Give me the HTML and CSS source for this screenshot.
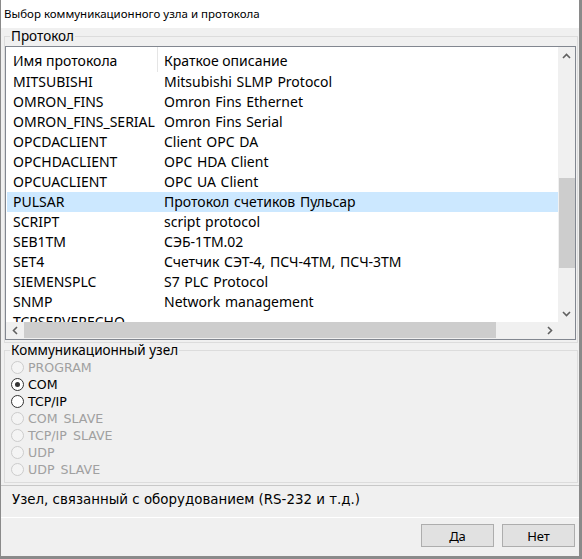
FILE: index.html
```html
<!DOCTYPE html>
<html lang="ru">
<head>
<meta charset="utf-8">
<title>Выбор коммуникационного узла и протокола</title>
<link rel="stylesheet" href="styles.css">
</head>
<body>
<div class="window">
  <div class="titlebar">Выбор коммуникационного узла и протокола</div>
  <fieldset class="group group-proto">
    <legend>Протокол</legend>
    <div class="listbox">
      <div class="view">
        <div class="lv-header">
          <div class="c1">Имя протокола</div>
          <div class="c2">Краткое описание</div>
        </div>
        <div class="lv-row"><div class="c1">MITSUBISHI</div><div class="c2">Mitsubishi SLMP Protocol</div></div>
        <div class="lv-row"><div class="c1">OMRON_FINS</div><div class="c2">Omron Fins Ethernet</div></div>
        <div class="lv-row"><div class="c1">OMRON_FINS_SERIAL</div><div class="c2">Omron Fins Serial</div></div>
        <div class="lv-row"><div class="c1">OPCDACLIENT</div><div class="c2">Client OPC DA</div></div>
        <div class="lv-row"><div class="c1">OPCHDACLIENT</div><div class="c2">OPC HDA Client</div></div>
        <div class="lv-row"><div class="c1">OPCUACLIENT</div><div class="c2">OPC UA Client</div></div>
        <div class="lv-row selected"><div class="c1">PULSAR</div><div class="c2">Протокол счетиков Пульсар</div></div>
        <div class="lv-row"><div class="c1">SCRIPT</div><div class="c2">script protocol</div></div>
        <div class="lv-row"><div class="c1">SEB1TM</div><div class="c2">СЭБ-1ТМ.02</div></div>
        <div class="lv-row"><div class="c1">SET4</div><div class="c2">Счетчик СЭТ-4, ПСЧ-4ТМ, ПСЧ-3ТМ</div></div>
        <div class="lv-row"><div class="c1">SIEMENSPLC</div><div class="c2">S7 PLC Protocol</div></div>
        <div class="lv-row"><div class="c1">SNMP</div><div class="c2">Network management</div></div>
        <div class="lv-row"><div class="c1">TCPSERVERECHO</div><div class="c2"></div></div>
      </div>
      <div class="vscroll">
        <div class="sb-btn">
          <svg width="9" height="6" viewBox="0 0 9 6"><path d="M1 5 L4.5 1.5 L8 5" fill="none" stroke="#606060" stroke-width="1.6"/></svg>
        </div>
        <div class="sb-track">
          <div class="sb-thumb-v" style="margin-top:114px;height:90px"></div>
        </div>
        <div class="sb-btn">
          <svg width="9" height="6" viewBox="0 0 9 6"><path d="M1 1 L4.5 4.5 L8 1" fill="none" stroke="#606060" stroke-width="1.6"/></svg>
        </div>
      </div>
      <div class="hscroll">
        <div class="sb-btn">
          <svg width="6" height="9" viewBox="0 0 6 9"><path d="M5 1 L1.5 4.5 L5 8" fill="none" stroke="#606060" stroke-width="1.6"/></svg>
        </div>
        <div class="sb-track-h">
          <div class="sb-thumb-h" style="width:472px"></div>
        </div>
        <div class="sb-btn">
          <svg width="6" height="9" viewBox="0 0 6 9"><path d="M1 1 L4.5 4.5 L1 8" fill="none" stroke="#606060" stroke-width="1.6"/></svg>
        </div>
      </div>
      <div class="corner"></div>
    </div>
  </fieldset>
  <fieldset class="group group-node">
    <legend>Коммуникационный узел</legend>
    <label class="radio disabled"><span class="dot"></span>PROGRAM</label>
    <label class="radio checked"><span class="dot"></span>COM</label>
    <label class="radio"><span class="dot"></span>TCP/IP</label>
    <label class="radio disabled"><span class="dot"></span>COM SLAVE</label>
    <label class="radio disabled"><span class="dot"></span>TCP/IP SLAVE</label>
    <label class="radio disabled"><span class="dot"></span>UDP</label>
    <label class="radio disabled"><span class="dot"></span>UDP SLAVE</label>
  </fieldset>
  <div class="desc">Узел, связанный с оборудованием (RS-232 и т.д.)</div>
  <div class="buttons">
    <button class="btn">Да</button>
    <button class="btn">Нет</button>
  </div>
</div>
</body>
</html>
```
FILE: styles.css
```css
html, body {
  margin: 0;
  padding: 0;
  background: #ffffff;
}
.window {
  width: 582px;
  height: 559px;
  box-sizing: border-box;
  border-left: 1px solid #8a8a8a;
  border-right: 3px solid #8a8a8a;
  border-bottom: 3px solid #8a8a8a;
  background: #f0f0f0;
  display: flex;
  flex-direction: column;
  font-family: "Noto Sans", "Open Sans", sans-serif;
  font-size: 13px;
  color: #000;
  overflow: hidden;
}
.titlebar {
  height: 28px;
  line-height: 28px;
  font-size: 11.5px;
  background: #ffffff;
  padding-left: 3px;
  white-space: nowrap;
}
.group {
  border: 1px solid #dcdcdc;
  margin: 1px 1px 0 3px;
  padding: 0;
  min-width: 0;
}
.group legend {
  padding: 0 1px;
  margin-left: 5px;
  line-height: 14px;
  height: 14px;
  font-size: 13.5px;
  white-space: nowrap;
}
.group-proto {
  padding: 3px 1px 2px 0;
}
.listbox {
  height: 294px;
  box-sizing: border-box;
  border: 1px solid #828790;
  background: #ffffff;
  display: grid;
  grid-template-columns: 1fr 17px;
  grid-template-rows: 1fr 17px;
  overflow: hidden;
  font-size: 14px;
}
.view {
  overflow: hidden;
  min-width: 0;
  min-height: 0;
}
.lv-header {
  display: flex;
  height: 25px;
  line-height: 28px;
  white-space: nowrap;
}
.lv-header .c1 {
  width: 152px;
  box-sizing: border-box;
  padding-left: 7px;
  border-right: 1px solid #e5e5e5;
}
.lv-header .c2 {
  padding-left: 6px;
}
.lv-row {
  display: flex;
  height: 20px;
  line-height: 20px;
  margin-left: 1px;
  white-space: nowrap;
}
.lv-row .c1 {
  width: 151px;
  flex: none;
  box-sizing: border-box;
  padding-left: 6px;
}
.lv-row .c2 {
  padding-left: 6px;
  word-spacing: 1px;
}
.lv-row.selected {
  background: #cce8ff;
}
.vscroll {
  background: #f0f0f0;
  display: flex;
  flex-direction: column;
}
.sb-btn {
  width: 17px;
  height: 17px;
  flex: none;
  display: flex;
  align-items: center;
  justify-content: center;
}
.sb-track {
  flex: 1;
}
.sb-thumb-v {
  margin-left: 1px;
  background: #cdcdcd;
}
.hscroll {
  background: #f0f0f0;
  display: flex;
}
.sb-track-h {
  flex: 1;
  padding-left: 1px;
}
.sb-thumb-h {
  height: 16px;
  background: #cdcdcd;
}
.corner {
  background: #f0f0f0;
}
.group-node {
  margin-top: 0;
  padding: 2px 0 4px 0;
  display: flex;
  flex-direction: column;
}
.radio {
  display: flex;
  align-items: center;
  height: 17px;
  padding-left: 6px;
  white-space: nowrap;
  font-family: "DejaVu Sans", sans-serif;
  font-size: 12.6px;
  word-spacing: 2px;
}
.radio .dot {
  width: 13px;
  height: 13px;
  box-sizing: border-box;
  border: 1px solid #333333;
  border-radius: 50%;
  background: #ffffff;
  margin-right: 4px;
  display: flex;
  align-items: center;
  justify-content: center;
}
.radio.checked .dot::after {
  content: "";
  width: 5px;
  height: 5px;
  border-radius: 50%;
  background: #333333;
}
.radio.disabled {
  color: #a0a0a0;
}
.radio.disabled .dot {
  border-color: #cccccc;
  background: #f4f4f4;
}
.desc {
  margin-top: 2px;
  border-top: 1px solid #c8c8c8;
  border-bottom: 1px solid #ffffff;
  height: 31px;
  line-height: 27px;
  padding-left: 11px;
  white-space: nowrap;
  font-family: "DejaVu Sans", sans-serif;
  font-size: 13.4px;
}
.buttons {
  flex: 1;
  display: flex;
  justify-content: flex-end;
  align-items: flex-start;
  gap: 8px;
  padding: 6px 4px 0 0;
}
.btn {
  width: 73px;
  height: 23px;
  box-sizing: border-box;
  border: 1px solid #adadad;
  background: #e1e1e1;
  font-family: inherit;
  font-size: 13px;
  color: #000;
  padding: 0;
}
```
